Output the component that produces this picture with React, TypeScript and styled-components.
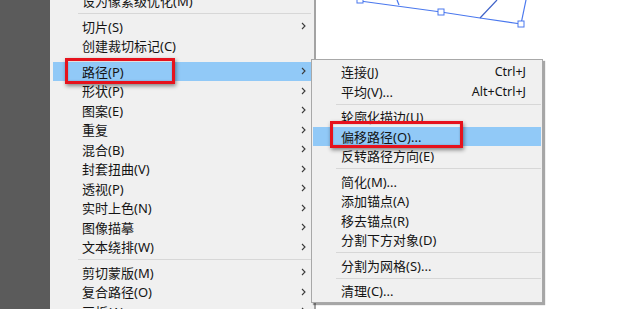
import styled, { createGlobalStyle } from 'styled-components';

const GlobalStyle = createGlobalStyle`
  html, body {
    margin: 0;
    padding: 0;
    background: #ffffff;
  }
  body {
    font-family: "Noto Sans", "Noto Sans CJK SC", sans-serif;
  }
`;

const Page = styled.div`
  display: flex;
  width: 620px;
  height: 309px;
  overflow: hidden;
`;

const Sidebar = styled.div`
  width: 50px;
  flex-shrink: 0;
  background: #5b5b5b;
`;

const MenuPanel = styled.div`
  position: relative;
  z-index: 2;
  width: 264px;
  flex-shrink: 0;
  background: #f0f0f0;
  border-right: 2px solid #a3a3a3;
`;

const MenuList = styled.div`
  display: flex;
  flex-direction: column;
  margin-top: -9px;
  padding: 0 3px;
`;

const Item = styled.div<{ $active?: boolean; $indent: number; $endPad: number }>`
  position: relative;
  display: flex;
  align-items: center;
  height: 19.5px;
  padding: 0 ${({ $endPad }) => $endPad}px 0 ${({ $indent }) => $indent}px;
  background: ${({ $active }) => ($active ? '#91c9f7' : 'transparent')};
  color: #141414;
  font-size: 13px;
  white-space: nowrap;
`;

const Label = styled.span`
  flex: 1;
`;

const Shortcut = styled.span`
  font-size: 12.5px;
  color: #141414;
`;

const Separator = styled.div<{ $indent: number; $hidden?: boolean }>`
  height: 6px;
  display: flex;
  align-items: center;
  padding-left: ${({ $indent }) => $indent}px;

  &::after {
    content: '';
    flex: 1;
    height: 1px;
    background: ${({ $hidden }) => ($hidden ? 'transparent' : '#d7d7d7')};
  }
`;

const Arrow = styled.svg`
  width: 5px;
  height: 8px;
  flex-shrink: 0;
`;

const Highlight = styled.div<{ $left: number; $top: number; $w: number; $h: number }>`
  position: absolute;
  left: ${({ $left }) => $left}px;
  top: ${({ $top }) => $top}px;
  width: ${({ $w }) => $w}px;
  height: ${({ $h }) => $h}px;
  box-sizing: border-box;
  border: 3px solid #e6121c;
  box-shadow: 1px 2px 4px rgba(0, 0, 0, 0.45), inset 0 0 2px rgba(0, 0, 0, 0.25);
  pointer-events: none;
`;

const Submenu = styled.div`
  position: absolute;
  left: 261px;
  top: 59px;
  width: 232px;
  box-sizing: border-box;
  padding: 2px 1px 1px;
  background: #f0f0f0;
  border: 1px solid #a8a8a8;
  box-shadow: 2px 2px 1px rgba(0, 0, 0, 0.35);
  display: flex;
  flex-direction: column;
`;

const Canvas = styled.div`
  position: relative;
  z-index: 1;
  flex: 1;
  background: #ffffff;
`;

const Drawing = styled.svg`
  display: block;
  width: 304px;
  height: 309px;
`;

function Chevron() {
  return (
    <Arrow viewBox="0 0 5 8">
      <path d="M1 1 L4 4 L1 7" fill="none" stroke="#3a3a3a" strokeWidth="1.1" />
    </Arrow>
  );
}

type Entry = { label: string; sub?: boolean; active?: boolean; sep?: boolean; hidden?: boolean };

const mainEntries: Entry[] = [
  { label: '设为像素级优化(M)' },
  { label: '', sep: true },
  { label: '切片(S)', sub: true },
  { label: '创建裁切标记(C)' },
  { label: '', sep: true, hidden: true },
  { label: '路径(P)', sub: true, active: true },
  { label: '形状(P)', sub: true },
  { label: '图案(E)', sub: true },
  { label: '重复', sub: true },
  { label: '混合(B)', sub: true },
  { label: '封套扭曲(V)', sub: true },
  { label: '透视(P)', sub: true },
  { label: '实时上色(N)', sub: true },
  { label: '图像描摹', sub: true },
  { label: '文本绕排(W)', sub: true },
  { label: '', sep: true },
  { label: '剪切蒙版(M)', sub: true },
  { label: '复合路径(O)', sub: true },
  { label: '画板(A)', sub: true },
];

type SubEntry = { label: string; shortcut?: string; active?: boolean; sep?: boolean };

const pathEntries: SubEntry[] = [
  { label: '连接(J)', shortcut: 'Ctrl+J' },
  { label: '平均(V)...', shortcut: 'Alt+Ctrl+J' },
  { label: '', sep: true },
  { label: '轮廓化描边(U)' },
  { label: '偏移路径(O)...', active: true },
  { label: '反转路径方向(E)' },
  { label: '', sep: true },
  { label: '简化(M)...' },
  { label: '添加锚点(A)' },
  { label: '移去锚点(R)' },
  { label: '分割下方对象(D)' },
  { label: '', sep: true },
  { label: '分割为网格(S)...' },
  { label: '', sep: true },
  { label: '清理(C)...' },
];

function Handle({ x, y }: { x: number; y: number }) {
  return <rect x={x - 3} y={y - 3} width="6" height="6" fill="#fff" stroke="#4a78ee" strokeWidth="1" />;
}

export default function App() {
  return (
    <Page>
      <GlobalStyle />
      <Sidebar />
      <MenuPanel>
        <MenuList>
          {mainEntries.map((e, i) =>
            e.sep ? (
              <Separator key={i} $indent={25} $hidden={e.hidden} />
            ) : (
              <Item key={i} $active={e.active} $indent={29} $endPad={5}>
                <Label>{e.label}</Label>
                {e.sub && <Chevron />}
                {e.active && <Highlight $left={12} $top={-4} $w={110} $h={26} />}
              </Item>
            )
          )}
        </MenuList>
        <Submenu>
          {pathEntries.map((e, i) =>
            e.sep ? (
              <Separator key={i} $indent={23} />
            ) : (
              <Item key={i} $active={e.active} $indent={28} $endPad={15}>
                <Label>{e.label}</Label>
                {e.shortcut && <Shortcut>{e.shortcut}</Shortcut>}
                {e.active && <Highlight $left={17} $top={-6} $w={133} $h={27} />}
              </Item>
            )
          )}
        </Submenu>
      </MenuPanel>
      <Canvas>
        <Drawing viewBox="316 0 304 309">
          <g fill="none" stroke="#4a78ee" strokeWidth="1.2">
            <polyline points="360,1 441,12 480,18 521,24" />
            <line x1="397" y1="0" x2="399" y2="5" />
            <line x1="480" y1="18" x2="497" y2="0" stroke="#3f62c8" />
            <line x1="521" y1="24" x2="526" y2="0" />
          </g>
          <Handle x={360} y={0} />
          <Handle x={441} y={12} />
          <Handle x={521} y={24} />
        </Drawing>
      </Canvas>
    </Page>
  );
}
